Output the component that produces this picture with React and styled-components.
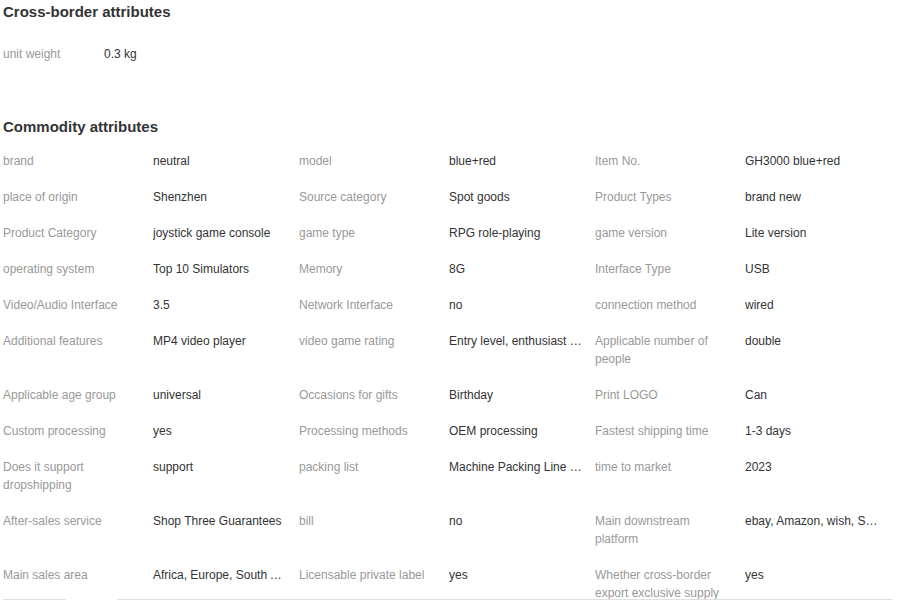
import React from "react";
import styled, { createGlobalStyle } from "styled-components";

const GlobalStyle = createGlobalStyle`
  html, body {
    margin: 0;
    padding: 0;
    background: #fff;
    font-family: "Liberation Sans", Arial, sans-serif;
    overflow: hidden;
  }
`;

const crossBorder = [{ label: "unit weight", value: "0.3 kg" }];

const commodity = [
  ["brand", "neutral"],
  ["model", "blue+red"],
  ["Item No.", "GH3000 blue+red"],
  ["place of origin", "Shenzhen"],
  ["Source category", "Spot goods"],
  ["Product Types", "brand new"],
  ["Product Category", "joystick game console"],
  ["game type", "RPG role-playing"],
  ["game version", "Lite version"],
  ["operating system", "Top 10 Simulators"],
  ["Memory", "8G"],
  ["Interface Type", "USB"],
  ["Video/Audio Interface", "3.5"],
  ["Network Interface", "no"],
  ["connection method", "wired"],
  ["Additional features", "MP4 video player"],
  ["video game rating", "Entry level, enthusiast level"],
  ["Applicable number of people", "double"],
  ["Applicable age group", "universal"],
  ["Occasions for gifts", "Birthday"],
  ["Print LOGO", "Can"],
  ["Custom processing", "yes"],
  ["Processing methods", "OEM processing"],
  ["Fastest shipping time", "1-3 days"],
  ["Does it support dropshipping", "support"],
  ["packing list", "Machine Packing Line Manual"],
  ["time to market", "2023"],
  ["After-sales service", "Shop Three Guarantees"],
  ["bill", "no"],
  ["Main downstream platform", "ebay, Amazon, wish, Shopee"],
  ["Main sales area", "Africa, Europe, South America"],
  ["Licensable private label", "yes"],
  ["Whether cross-border export exclusive supply", "yes"],
];

const Page = styled.div`
  padding: 0 3px;
  width: 893px;
  height: 601px;
  overflow: hidden;
  box-sizing: border-box;
`;

const Section = styled.section`
  margin-bottom: ${(p) => p.$gap}px;
`;

const Title = styled.h3`
  margin: 0;
  font-size: 15px;
  line-height: 24px;
  font-weight: 700;
  color: #333;
`;

const Grid = styled.div`
  display: grid;
  grid-template-columns: ${(p) => p.$cols};
  margin-top: ${(p) => p.$top}px;
  font-size: 12px;
  line-height: 18px;
`;

const Label = styled.div`
  color: #999;
  padding-right: 20px;
  padding-bottom: 18px;
`;

const Value = styled.div`
  color: #333;
  padding-right: 13px;
  padding-bottom: 18px;
  white-space: nowrap;
  overflow: hidden;
  text-overflow: ellipsis;
`;

const TabLine = styled.div`
  position: fixed;
  left: 3px;
  right: 7px;
  bottom: 1px;
  display: flex;
  gap: 51px;
`;

const TabSegment = styled.div`
  height: 1px;
  background: #e0e0e0;
  flex-grow: ${(p) => (p.$grow ? 1 : 0)};
  flex-shrink: 0;
  width: ${(p) => (p.$grow ? "auto" : "63px")};
`;

export default function App() {
  return (
    <>
      <GlobalStyle />
      <Page>
        <Section $gap={34}>
          <Title>Cross-border attributes</Title>
          <Grid $cols="101px 150px" $top={21}>
            {crossBorder.map((item) => (
              <React.Fragment key={item.label}>
                <Label>{item.label}</Label>
                <Value>{item.value}</Value>
              </React.Fragment>
            ))}
          </Grid>
        </Section>
        <Section $gap={0}>
          <Title>Commodity attributes</Title>
          <Grid $cols="repeat(3, 150px 146px)" $top={13}>
            {commodity.map(([label, value]) => (
              <React.Fragment key={label}>
                <Label>{label}</Label>
                <Value>{value}</Value>
              </React.Fragment>
            ))}
          </Grid>
        </Section>
      </Page>
      <TabLine>
        <TabSegment />
        <TabSegment $grow />
      </TabLine>
    </>
  );
}
